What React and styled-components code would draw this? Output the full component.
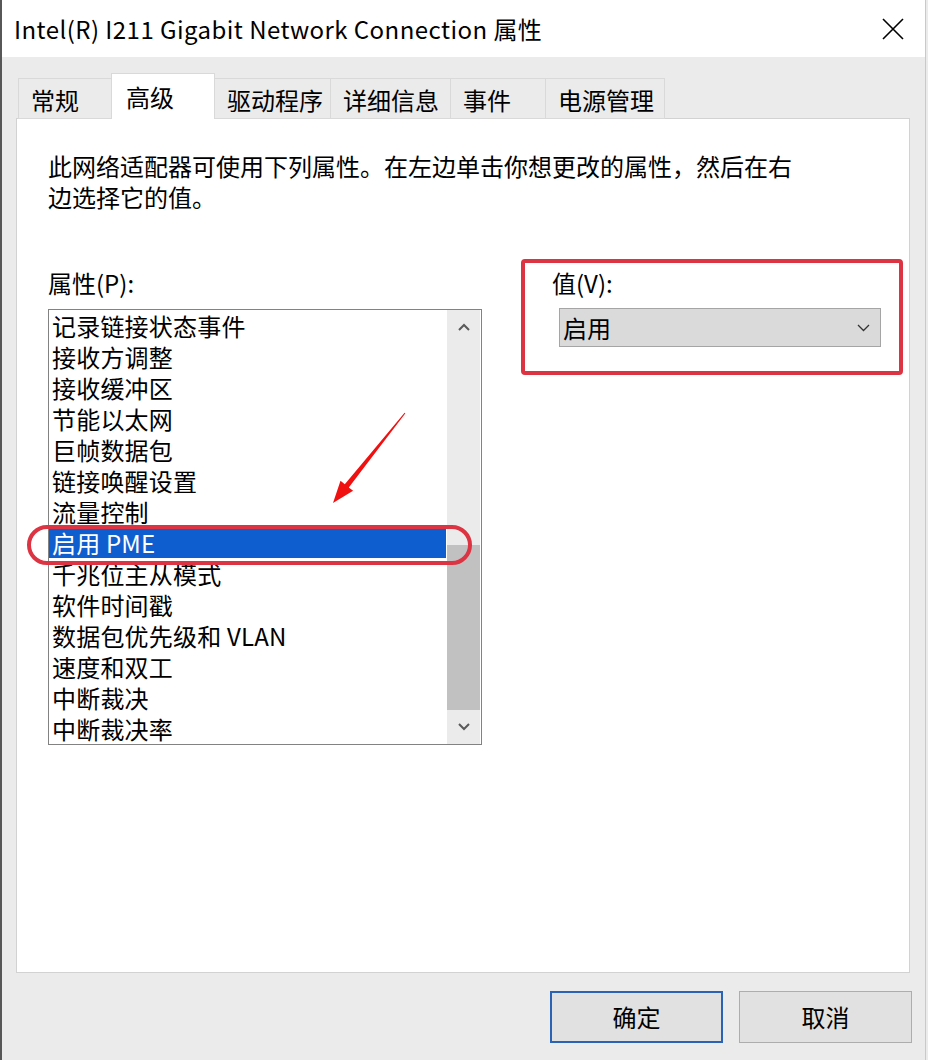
import React from 'react';
import styled, { createGlobalStyle } from 'styled-components';

const Global = createGlobalStyle`
  html, body { margin: 0; padding: 0; background: #ebebeb; }
  body { font-family: "Noto Sans CJK SC", "Microsoft YaHei", sans-serif; }
  * { box-sizing: border-box; }
`;

const Window = styled.div`
  width: 926px;
  height: 1060px;
  background: #ebebeb;
  border-left: 2px solid #575757;
  border-right: 1px solid #c9c9c9;
  display: flex;
  flex-direction: column;
  font-family: "Noto Sans CJK SC", sans-serif;
  color: #000;
  overflow: hidden;
`;

const TitleBar = styled.div`
  height: 57px;
  flex: none;
  background: #fff;
  display: flex;
  align-items: center;
  justify-content: space-between;
  padding: 0 21px 0 12px;
  font-size: 24px;
  line-height: 32px;
`;

const TitleText = styled.span`
  letter-spacing: 0.45px;
`;

const CloseIcon = styled.svg`
  width: 22px;
  height: 22px;
  display: block;
`;

const TabRow = styled.div`
  display: flex;
  align-items: flex-end;
  height: 46px;
  margin-top: 16px;
  padding-left: 17px;
  position: relative;
  z-index: 1;
  margin-bottom: -1px;
`;

const Tab = styled.div`
  width: ${p => p.$w}px;
  height: ${p => (p.$active ? 46 : 41)}px;
  margin-left: -1px;
  background: ${p => (p.$active ? '#fff' : '#ebebeb')};
  border: 1px solid #d9d9d9;
  border-bottom: ${p => (p.$active ? 'none' : '1px solid #d9d9d9')};
  padding: ${p => (p.$active ? '1px 0 0 14px' : '2px 0 0 12px')};
  display: flex;
  align-items: center;
  font-size: 24px;
  line-height: 32px;
  white-space: nowrap;
  position: relative;
  z-index: ${p => (p.$active ? 2 : 1)};
`;

const Panel = styled.div`
  margin-left: 14px;
  width: 894px;
  height: 855px;
  flex: none;
  background: #fff;
  border: 1px solid #d2d2d2;
  padding: 31px 0 0 31px;
`;

const Description = styled.p`
  margin: 0;
  max-width: 760px;
  font-size: 24px;
  line-height: 31px;
`;

const Columns = styled.div`
  display: flex;
  gap: 70px;
  margin-top: 55px;
`;

const LeftColumn = styled.div`
  width: 434px;
  flex: none;
  position: relative;
`;

const RightColumn = styled.div`
  flex: 1;
  position: relative;
`;

const FieldLabel = styled.div`
  font-size: 24px;
  line-height: 32px;
  height: 32px;
`;

const ListBox = styled.div`
  margin-top: 10px;
  width: 434px;
  height: 436px;
  border: 1px solid #828282;
  display: flex;
  background: #fff;
`;

const Items = styled.div`
  flex: 1;
  display: flex;
  flex-direction: column;
`;

const Item = styled.div`
  height: 31px;
  line-height: 31px;
  font-size: 24px;
  padding-left: 3px;
  white-space: nowrap;
  letter-spacing: 0.2px;
  background: ${p => (p.$selected ? '#0f5ecf' : 'transparent')};
  color: ${p => (p.$selected ? '#fff' : '#000')};
`;

const ScrollBar = styled.div`
  width: 33px;
  margin: 0 1px;
  background: #ebebeb;
  display: flex;
  flex-direction: column;
`;

const ScrollButton = styled.div`
  height: 34px;
  flex: none;
  display: flex;
  align-items: center;
  justify-content: center;
`;

const Track = styled.div`
  flex: 1;
  display: flex;
  flex-direction: column;
  justify-content: flex-end;
`;

const Thumb = styled.div`
  height: 165px;
  background: #c1c1c1;
`;

const Chevron = styled.svg`
  display: block;
  width: ${p => p.$w}px;
  height: ${p => p.$h}px;
`;

const Select = styled.div`
  margin: 9px 0 0 7px;
  width: 322px;
  height: 39px;
  background: #dadada;
  border: 1px solid #a5a5a5;
  display: flex;
  align-items: center;
  justify-content: space-between;
  padding: 0 10px 0 3px;
  font-size: 24px;
  line-height: 32px;
`;

const RedBox = styled.div`
  position: absolute;
  left: -31px;
  top: -8px;
  width: 382px;
  height: 116px;
  border: 4px solid #dc3442;
  border-radius: 4px;
  pointer-events: none;
`;

const RedOval = styled.div`
  position: absolute;
  left: -21px;
  top: 258px;
  width: 445px;
  height: 40px;
  border: 4px solid #dc3442;
  border-radius: 20px;
  pointer-events: none;
`;

const Arrow = styled.svg`
  position: absolute;
  left: 272px;
  top: 133px;
  width: 100px;
  height: 110px;
  pointer-events: none;
`;

const ButtonRow = styled.div`
  display: flex;
  justify-content: flex-end;
  gap: 16px;
  margin-top: 18px;
  padding-right: 13px;
`;

const Button = styled.div`
  width: 173px;
  height: 52px;
  background: #e1e1e1;
  border: ${p => (p.$primary ? '2px solid #2a63b6' : '1px solid #adadad')};
  display: flex;
  align-items: center;
  justify-content: center;
  font-size: 24px;
  line-height: 32px;
`;

const tabs = [
  { label: '常规', w: 94 },
  { label: '高级', w: 104, active: true },
  { label: '驱动程序', w: 117 },
  { label: '详细信息', w: 121 },
  { label: '事件', w: 96 },
  { label: '电源管理', w: 120 },
];

const items = [
  '记录链接状态事件',
  '接收方调整',
  '接收缓冲区',
  '节能以太网',
  '巨帧数据包',
  '链接唤醒设置',
  '流量控制',
  '启用 PME',
  '千兆位主从模式',
  '软件时间戳',
  '数据包优先级和 VLAN',
  '速度和双工',
  '中断裁决',
  '中断裁决率',
];

export default function App() {
  return (
    <>
      <Global />
      <Window>
        <TitleBar>
          <TitleText>Intel(R) I211 Gigabit Network Connection 属性</TitleText>
          <CloseIcon viewBox="0 0 22 22">
            <path d="M1 1 L21 21 M21 1 L1 21" stroke="#000" strokeWidth="1.6" fill="none" />
          </CloseIcon>
        </TitleBar>
        <TabRow>
          {tabs.map(t => (
            <Tab key={t.label} $w={t.w} $active={t.active}>{t.label}</Tab>
          ))}
        </TabRow>
        <Panel>
          <Description>
            此网络适配器可使用下列属性。在左边单击你想更改的属性，然后在右边选择它的值。
          </Description>
          <Columns>
            <LeftColumn>
              <FieldLabel>属性(P):</FieldLabel>
              <ListBox>
                <Items>
                  {items.map(it => (
                    <Item key={it} $selected={it === '启用 PME'}>{it}</Item>
                  ))}
                </Items>
                <ScrollBar>
                  <ScrollButton>
                    <Chevron $w={12} $h={8} viewBox="0 0 12 8">
                      <path d="M1 7 L6 2 L11 7" stroke="#5a5a5a" strokeWidth="2" fill="none" />
                    </Chevron>
                  </ScrollButton>
                  <Track>
                    <Thumb />
                  </Track>
                  <ScrollButton>
                    <Chevron $w={12} $h={8} viewBox="0 0 12 8">
                      <path d="M1 1 L6 6 L11 1" stroke="#5a5a5a" strokeWidth="2" fill="none" />
                    </Chevron>
                  </ScrollButton>
                </ScrollBar>
              </ListBox>
              <RedOval />
              <Arrow viewBox="0 0 100 110">
                <polygon
                  points="85.4,13.3 28.8,87.4 33.1,90.8 13,103 20.5,80.8 24.8,84.2 84.6,12.7"
                  fill="#f01010"
                />
              </Arrow>
            </LeftColumn>
            <RightColumn>
              <FieldLabel>值(V):</FieldLabel>
              <Select>
                <span>启用</span>
                <Chevron $w={13} $h={8} viewBox="0 0 13 8">
                  <path d="M1 1 L6.5 6.5 L12 1" stroke="#333" strokeWidth="1.3" fill="none" />
                </Chevron>
              </Select>
              <RedBox />
            </RightColumn>
          </Columns>
        </Panel>
        <ButtonRow>
          <Button $primary>确定</Button>
          <Button>取消</Button>
        </ButtonRow>
      </Window>
    </>
  );
}
